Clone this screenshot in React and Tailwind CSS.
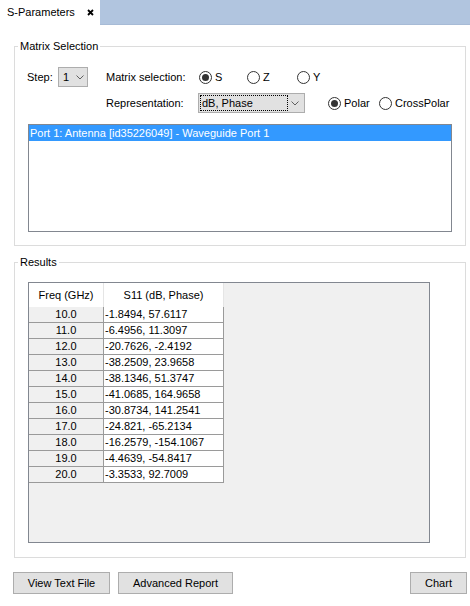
import React from 'react';

const rows = [
  ['10.0', '-1.8494, 57.6117'],
  ['11.0', '-6.4956, 11.3097'],
  ['12.0', '-20.7626, -2.4192'],
  ['13.0', '-38.2509, 23.9658'],
  ['14.0', '-38.1346, 51.3747'],
  ['15.0', '-41.0685, 164.9658'],
  ['16.0', '-30.8734, 141.2541'],
  ['17.0', '-24.821, -65.2134'],
  ['18.0', '-16.2579, -154.1067'],
  ['19.0', '-4.4639, -54.8417'],
  ['20.0', '-3.3533, 92.7009'],
];

function Chevron() {
  return (
    <svg width="8" height="5" viewBox="0 0 8 5" className="shrink-0">
      <path d="M0.5 0.5 L4 4 L7.5 0.5" fill="none" stroke="#606060" strokeWidth="1" />
    </svg>
  );
}

function Radio({ checked, label, className }) {
  return (
    <div className={'flex items-center ' + (className || '')}>
      <span className="w-[13px] h-[13px] rounded-full border border-[#333333] bg-white flex items-center justify-center shrink-0">
        {checked && <span className="w-[7px] h-[7px] rounded-full bg-[#333333]" />}
      </span>
      <span className="ml-[3px]">{label}</span>
    </div>
  );
}

function Button({ children, className }) {
  return (
    <button className={'h-[22px] border border-[#adadad] bg-[#e1e1e1] flex items-center justify-center ' + (className || '')}>
      {children}
    </button>
  );
}

export default function App() {
  return (
    <div
      className="w-[470px] h-[606px] bg-white text-[11px] leading-[13px] text-black overflow-hidden"
      style={{ fontFamily: '"Liberation Sans", Arial, sans-serif' }}
    >
      {/* tab strip */}
      <div className="h-[25px] bg-[#b1c5df] flex border-b border-[#a7bbd6]">
        <div className="w-[100px] h-[25px] bg-white flex items-center pl-[7px]">
          <span>S-Parameters</span>
          <svg width="7" height="7" viewBox="0 0 7 7" className="ml-[12px]">
            <path d="M1 1 L6 6 M6 1 L1 6" stroke="#000" strokeWidth="1.8" />
          </svg>
        </div>
      </div>

      <div className="flex flex-col pt-[15px]">
        {/* Matrix Selection */}
        <fieldset className="ml-[14px] w-[452px] border border-[#dcdcdc] px-[13px] pb-[13px]">
          <legend className="ml-[-10px] px-[2px] leading-[13px]">Matrix Selection</legend>
          <div className="pt-[14px] flex flex-col">
            <div className="flex items-center h-[20px]">
              <span className="w-[30px] -ml-[1px] mr-[1px]">Step:</span>
              <div className="w-[30px] h-[20px] border border-[#adadad] bg-[#e1e1e1] flex items-center pl-[4px] pr-[3px] justify-between">
                <span>1</span>
                <Chevron />
              </div>
              <span className="ml-[18px] w-[93px]">Matrix selection:</span>
              <Radio checked label="S" className="w-[48px]" />
              <Radio label="Z" className="w-[50px]" />
              <Radio label="Y" />
            </div>
            <div className="flex items-center h-[20px] mt-[6px]">
              <span className="ml-[78px] w-[92px]">Representation:</span>
              <div className="w-[107px] h-[20px] border border-[#adadad] bg-[#e1e1e1] flex items-center pl-[1px] pr-[5px] justify-between">
                <span className="w-[88px] h-[16px] border border-dotted border-black flex items-center pl-[1px]">dB, Phase</span>
                <Chevron />
              </div>
              <Radio checked label="Polar" className="ml-[23px] w-[51px]" />
              <Radio label="CrossPolar" />
            </div>
            <div className="mt-[11px] h-[108px] border border-[#828790] bg-white">
              <div className="h-[16px] bg-[#3399ff] text-white flex items-center pl-[1px]">
                Port 1: Antenna [id35226049] - Waveguide Port 1
              </div>
            </div>
          </div>
        </fieldset>

        {/* Results */}
        <fieldset className="mt-[10px] ml-[14px] w-[452px] border border-[#dcdcdc] px-[13px] pb-[14px]">
          <legend className="ml-[-10px] px-[2px] leading-[13px]">Results</legend>
          <div className="pt-[13px]">
            <div className="w-[402px] h-[261px] border border-[#828790] bg-[#f0f0f0] flex flex-col">
              <div className="flex h-[24px]">
                <div className="w-[75px] bg-white border-r border-[#e5e5e5] flex items-center justify-center">Freq (GHz)</div>
                <div className="w-[120px] bg-white border-r border-[#e5e5e5] flex items-center justify-center">S11 (dB, Phase)</div>
              </div>
              {rows.map(([f, v]) => (
                <div key={f} className="flex h-[16px]">
                  <div className="w-[75px] bg-[#f0f0f0] border-r border-b border-[#9a9a9a] flex items-center justify-center">{f}</div>
                  <div className="w-[120px] bg-white border-r border-b border-[#9a9a9a] flex items-center pl-[1px]">{v}</div>
                </div>
              ))}
            </div>
          </div>
        </fieldset>

        {/* buttons */}
        <div className="mt-[14px] flex justify-between pl-[13px] pr-[3px]">
          <div className="flex gap-[8px]">
            <Button className="w-[97px]">View Text File</Button>
            <Button className="w-[115px]">Advanced Report</Button>
          </div>
          <Button className="w-[57px]">Chart</Button>
        </div>
      </div>
    </div>
  );
}
